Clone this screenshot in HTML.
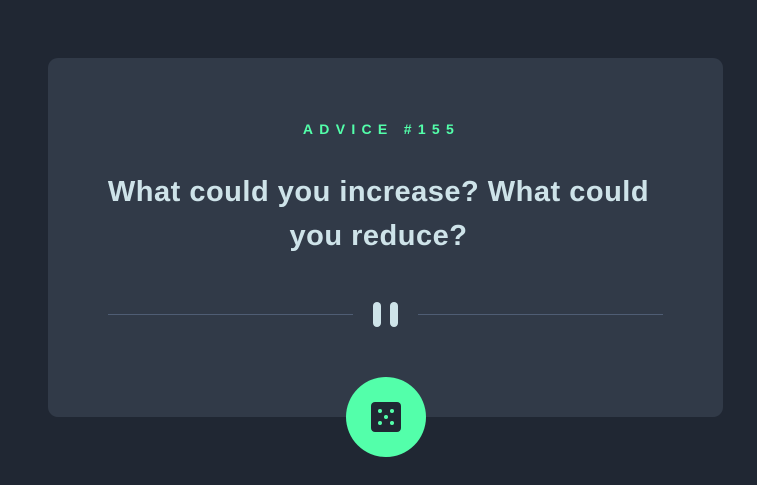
<!DOCTYPE html>
<html><head><style>
html,body{margin:0;padding:0;background:#202733;width:757px;height:485px;overflow:hidden;font-family:"Liberation Sans",sans-serif}
.card{position:absolute;left:48px;top:58px;width:675px;height:359px;background:#313A48;border-radius:10px}
.lbl{position:absolute;left:0;right:0;top:121px;text-align:center;color:#53FFAA;font-weight:bold;font-size:14px;letter-spacing:6.3px;padding-left:6px}
.q{position:absolute;left:95px;right:95px;top:170px;text-align:center;color:#CEE3E9;font-weight:bold;font-size:29px;line-height:44px;letter-spacing:0.5px}
.line{position:absolute;top:314px;height:1px;background:#4F5D74}
.bar{position:absolute;top:302px;width:8px;height:25px;border-radius:4px;background:#CEE3E9}
.btn{position:absolute;left:346px;top:377px;width:80px;height:80px;border-radius:50%;background:#53FFAA}
.dice{position:absolute;left:25px;top:25px;width:30px;height:30px;border-radius:4px;background:#202733}
.d{position:absolute;width:4px;height:4px;border-radius:50%;background:#53FFAA}
</style></head><body>
<div class="card"></div>
<div class="lbl">ADVICE #155</div>
<div class="q">What could you increase? What could you reduce?</div>
<div class="line" style="left:108px;width:245px"></div>
<div class="line" style="left:418px;width:245px"></div>
<div class="bar" style="left:373px"></div>
<div class="bar" style="left:390px"></div>
<div class="btn"><div class="dice">
<div class="d" style="left:7px;top:7px"></div><div class="d" style="left:19px;top:7px"></div>
<div class="d" style="left:13px;top:13px"></div>
<div class="d" style="left:7px;top:19px"></div><div class="d" style="left:19px;top:19px"></div>
</div></div>
</body></html>
